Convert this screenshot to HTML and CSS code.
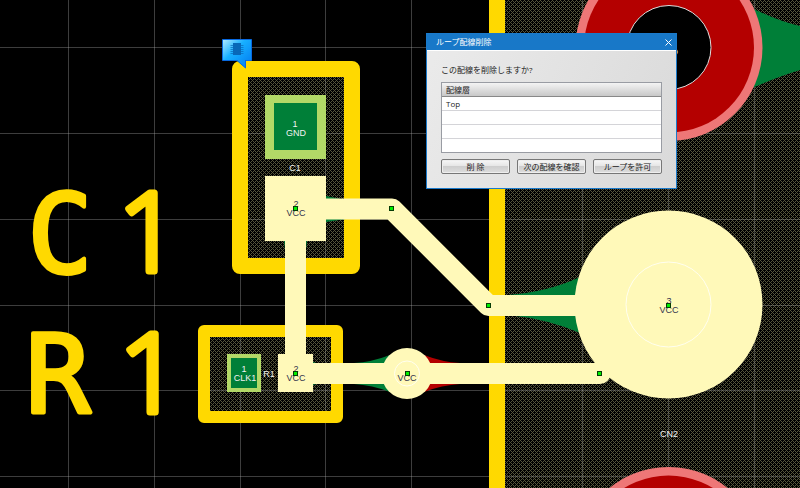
FILE: index.html
```html
<!DOCTYPE html>
<html lang="ja">
<head>
<meta charset="utf-8">
<title>ループ配線削除</title>
<link rel="stylesheet" href="styles.css">
</head>
<body>
<main class="workspace">
  <svg class="board" viewBox="0 0 800 488" preserveAspectRatio="xMinYMin slice" role="img" aria-label="PCB">
    <defs>
      <pattern id="hatch" width="4" height="4" patternUnits="userSpaceOnUse">
        <rect width="4" height="4" fill="#000"/>
        <path class="hatch-dots" d="M0 0h1v1h-1zM1 1h1v1h-1zM2 2h1v1h-1zM3 3h1v1h-1zM3 1h1v1h-1zM1 3h1v1h-1z"/>
      </pattern>
      <linearGradient id="flag" x1="0" y1="0" x2="1" y2="1">
        <stop offset="0" stop-color="#b4ecff"/>
        <stop offset=".4" stop-color="#18b0ff"/>
        <stop offset="1" stop-color="#0078f0"/>
      </linearGradient>
    </defs>

    <!-- copper area and component courtyards -->
    <rect width="800" height="488" fill="#000"/>
    <rect x="505" width="295" height="488" fill="url(#hatch)"/>
    <rect x="240" y="69" width="112" height="197" fill="url(#hatch)"/>
    <rect x="204" y="331" width="133" height="86" fill="url(#hatch)"/>

    <!-- grid -->
    <path class="grid" d="M68.5 0V488M154.5 0V488M240.5 0V488M325.5 0V488M411.5 0V488M497.5 0V488M582.5 0V488M668.5 0V488M754.5 0V488M0 47.5H800M0 133.5H800M0 219.5H800M0 305.5H800M0 390.5H800M0 476.5H800"/>

    <!-- silkscreen -->
    <rect x="489" width="16" height="488" class="silk"/>
    <rect x="240" y="69" width="112" height="197" class="outline outline-wide"/>
    <rect x="204" y="331" width="133" height="86" class="outline outline-slim"/>
    <text class="silk-text silk-letter" x="60" y="272">C</text>
    <text class="silk-text silk-digit" x="149" y="271">1</text>
    <text class="silk-text silk-letter" x="58" y="413">R</text>
    <text class="silk-text silk-digit" x="150" y="412">1</text>

    <!-- connector pads -->
    <path class="green" d="M750 7Q777 21 800 26V70Q777 77 750 89Z"/>
    <circle cx="669" cy="47.500" r="93.500" class="ring"/>
    <circle cx="669" cy="47.500" r="85" class="red"/>
    <circle cx="669" cy="47.500" r="42" class="drill"/>
    <circle cx="668.500" cy="560.500" r="93.500" class="ring"/>
    <circle cx="668.500" cy="560.500" r="85" class="red"/>

    <!-- teardrops -->
    <path class="green" d="M508 295Q548 292 580 277V333Q548 319 508 315Z"/>
    <path class="green" d="M354 363Q372 362 390 355V392Q372 385 354 384Z"/>
    <path class="red" d="M460 363Q442 362 424 355V392Q442 385 460 384Z"/>
    <path class="green" d="M326 196L346 200V219L326 222ZM284 241H307L305 258H286ZM285 350H290V354H285ZM313 362L320 364V383L313 385Z"/>

    <!-- pads -->
    <rect x="265" y="95" width="61" height="64" class="mask"/>
    <rect x="274" y="103" width="43" height="47" class="green"/>
    <rect x="227" y="354" width="34" height="38" class="mask"/>
    <rect x="231" y="358" width="26" height="30" class="green"/>

    <!-- selected net -->
    <circle cx="668.500" cy="304.500" r="94" class="net"/>
    <rect x="265" y="176" width="61" height="65" class="net"/>
    <rect x="278" y="354" width="35" height="38" class="net"/>
    <circle cx="407" cy="373.500" r="25.500" class="net"/>
    <path class="trace" d="M668 305.500H488.500L392 209H295.500V373.500H600"/>
    <circle cx="668.500" cy="304.500" r="42.500" class="hole"/>
    <circle cx="407" cy="373.500" r="12.500" class="hole"/>

    <g class="label label-light">
      <text x="295" y="127">1</text><text x="296" y="136">GND</text>
      <text x="295" y="171">C1</text>
      <text x="244" y="372">1</text><text x="245" y="381">CLK1</text>
      <text x="269" y="377">R1</text>
      <text x="669" y="437">CN2</text>
      <text x="668" y="55">GND</text>
    </g>
    <g class="label label-dark">
      <text x="296" y="207">2</text><text x="296" y="216">VCC</text>
      <text x="296" y="372">2</text><text x="296" y="381">VCC</text>
      <text x="407" y="381">VCC</text>
      <text x="669" y="304">3</text><text x="669" y="313">VCC</text>
    </g>
    <g class="node">
      <rect x="293.500" y="206.500" width="4" height="4"/>
      <rect x="389.500" y="206.500" width="4" height="4"/>
      <rect x="486.500" y="303.500" width="4" height="4"/>
      <rect x="666.500" y="303.500" width="4" height="4"/>
      <rect x="293.500" y="371.500" width="4" height="4"/>
      <rect x="405.500" y="371.500" width="4" height="4"/>
      <rect x="597.500" y="371.500" width="4" height="4"/>
    </g>

    <!-- component flag -->
    <path class="flag" d="M222.500 39.500H251.500V60.500H245.500V68L237 60.500H222.500Z"/>
    <rect x="233" y="43" width="8" height="12" class="chip"/>
    <path class="pins" d="M230.500 45.500H243.500M230.500 47.500H243.500M230.500 49.500H243.500M230.500 51.500H243.500M230.500 53.500H243.500"/>
  </svg>

  <section class="dialog" role="dialog" aria-labelledby="dialog-title">
    <header class="titlebar">
      <h1 id="dialog-title" class="title">ループ配線削除</h1>
      <button class="close" type="button" aria-label="閉じる">
        <svg class="close-icon" viewBox="0 0 7 7"><path d="M.5 .5L6.500 6.500M6.500 .5L.5 6.500"/></svg>
      </button>
    </header>
    <div class="content">
      <p class="question">この配線を削除しますか?</p>
      <table class="layers">
        <thead><tr><th scope="col">配線層</th></tr></thead>
        <tbody>
          <tr><td>Top</td></tr>
          <tr><td></td></tr>
          <tr><td></td></tr>
          <tr><td></td></tr>
        </tbody>
      </table>
      <div class="actions">
        <button class="action" type="button">削 除</button>
        <button class="action" type="button">次の配線を確認</button>
        <button class="action" type="button">ループを許可</button>
      </div>
    </div>
  </section>
</main>
</body>
</html>
```
FILE: styles.css
```css
* { box-sizing: border-box; }

body {
  margin: 0;
  background: #000;
  font-family: "Open Sans", "Noto Sans CJK JP", sans-serif;
  font-size: 8px;
  color: #222;
}

.workspace {
  position: relative;
  height: 100vh;
  overflow: hidden;
}

.board {
  display: block;
  width: 100%;
  height: 100%;
}

.hatch-dots { fill: #55553b; shape-rendering: crispEdges; }
.grid { stroke: #aaa; stroke-opacity: .36; fill: none; }
.silk { fill: #ffd900; }
.outline { fill: none; stroke: #ffd900; stroke-linejoin: round; }
.outline-wide { stroke-width: 16px; }
.outline-slim { stroke-width: 12px; }

.silk-text {
  font-size: 108px;
  text-anchor: middle;
  fill: #ffd900;
  stroke: #ffd900;
  stroke-linejoin: round;
}

.silk-letter {
  font-family: "DejaVu Sans Mono", monospace;
  stroke-width: 4px;
}

.silk-digit {
  font-family: "Open Sans", sans-serif;
  font-weight: 300;
  stroke-width: 7px;
}

.green { fill: #007f38; }
.red { fill: #b40000; }
.ring { fill: #ee7777; }
.drill { fill: #000; stroke: #ddd; }
.mask { fill: #b2d967; }
.net { fill: #fff9b9; }
.trace {
  fill: none;
  stroke: #fff9b9;
  stroke-width: 21px;
  stroke-linejoin: round;
  stroke-linecap: round;
}
.hole { fill: none; stroke: #fffff0; }

.label {
  font-family: "Liberation Sans", sans-serif;
  font-size: 9px;
  text-anchor: middle;
}
.label-light { fill: #f2f2f2; }
.label-dark { fill: #33334d; }
.node { fill: #00f000; stroke: #063c06; }

.flag { fill: url(#flag); stroke: #0969e0; }
.chip { fill: #0868b8; }
.pins { stroke: #0868b8; stroke-opacity: .7; }

.dialog {
  position: absolute;
  left: 426px;
  top: 33px;
  width: 251px;
  border: 1px solid #1a7acb;
  background: linear-gradient(115deg, #ebebeb, #d9d9d9);
}

.titlebar {
  display: flex;
  align-items: center;
  justify-content: space-between;
  height: 16px;
  padding: 0 4px 0 9px;
  background: #1878c8;
  color: #fff;
}

.title {
  margin: 0;
  font-size: 8px;
  font-weight: 400;
  line-height: 16px;
}

.close {
  display: flex;
  padding: 0;
  border: 0;
  background: none;
}

.close-icon {
  width: 7px;
  height: 7px;
  fill: none;
  stroke: #fff;
}

.content {
  padding: 13px 14px 14px;
  border-top: 1px solid #fff;
}

.question {
  margin: 0 0 6px;
  line-height: 12px;
}

.layers {
  width: 100%;
  border: 1px solid #999ca3;
  border-collapse: separate;
  border-spacing: 0;
  background: #fff;
}

.layers th,
.layers td {
  height: 14px;
  padding: 0 4px;
  border-bottom: 1px solid #d4d4d8;
  font-weight: 400;
  line-height: 12px;
  text-align: left;
}

.layers th {
  background: linear-gradient(#f4f4f4, #c8c8c8);
}

.layers tr:last-child td { height: 13px; border-bottom: 0; }
.layers thead tr:last-child th { border-bottom: 1px solid #888; }

.actions {
  display: flex;
  gap: 7px;
  margin-top: 6px;
}

.action {
  flex: 1;
  height: 15px;
  padding: 0;
  border: 1px solid #777;
  border-radius: 2px;
  background: linear-gradient(#f7f7f7, #e4e4e4 50%, #cecece 50%, #dedede);
  box-shadow: inset 0 0 0 1px #eee;
  color: #222;
  font: inherit;
  line-height: 12px;
  white-space: nowrap;
}
```
